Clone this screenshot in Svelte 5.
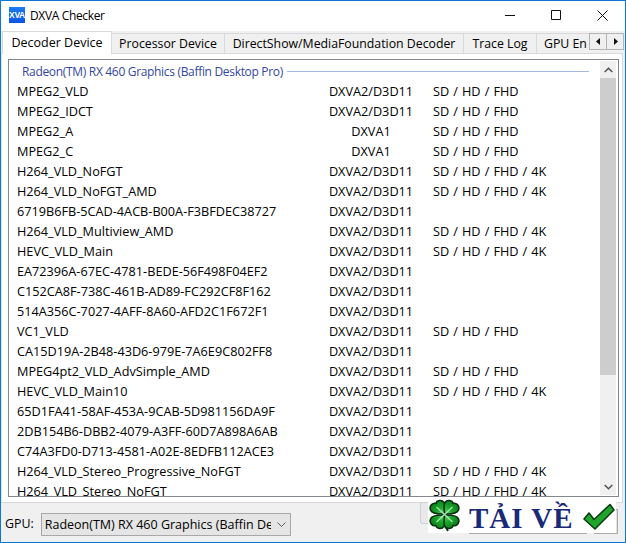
<script>
  const a = 'DXVA2/D3D11';
  const s = 'SD / HD / FHD';
  const k = 'SD / HD / FHD / 4K';
  const rows = [
    ['MPEG2_VLD', a, s],
    ['MPEG2_IDCT', a, s],
    ['MPEG2_A', 'DXVA1', s],
    ['MPEG2_C', 'DXVA1', s],
    ['H264_VLD_NoFGT', a, k],
    ['H264_VLD_NoFGT_AMD', a, k],
    ['6719B6FB-5CAD-4ACB-B00A-F3BFDEC38727', a, ''],
    ['H264_VLD_Multiview_AMD', a, k],
    ['HEVC_VLD_Main', a, k],
    ['EA72396A-67EC-4781-BEDE-56F498F04EF2', a, ''],
    ['C152CA8F-738C-461B-AD89-FC292CF8F162', a, ''],
    ['514A356C-7027-4AFF-8A60-AFD2C1F672F1', a, ''],
    ['VC1_VLD', a, s],
    ['CA15D19A-2B48-43D6-979E-7A6E9C802FF8', a, ''],
    ['MPEG4pt2_VLD_AdvSimple_AMD', a, s],
    ['HEVC_VLD_Main10', a, k],
    ['65D1FA41-58AF-453A-9CAB-5D981156DA9F', a, ''],
    ['2DB154B6-DBB2-4079-A3FF-60D7A898A6AB', a, ''],
    ['C74A3FD0-D713-4581-A02E-8EDFB112ACE3', a, ''],
    ['H264_VLD_Stereo_Progressive_NoFGT', a, k],
    ['H264_VLD_Stereo_NoFGT', a, k]
  ];
</script>

<div class="window">
  <header class="title">
    <div class="logo">XVA</div>
    <span class="title-text">DXVA Checker</span>
    <div class="controls">
      <svg width="11" height="11" viewBox="0 0 11 11"><path d="M0 5.500h10" stroke="#111" fill="none"/></svg>
      <svg width="11" height="11" viewBox="0 0 11 11"><path d="M.5.500h9v9h-9z" stroke="#111" fill="none"/></svg>
      <svg width="11" height="11" viewBox="0 0 11 11"><path d="M.5.500l10 10M10.500.500l-10 10" stroke="#111" fill="none"/></svg>
    </div>
  </header>

  <div class="tabs">
    <div class="tab active">Decoder Device</div>
    <div class="tab t-proc">Processor Device</div>
    <div class="tab t-show">DirectShow/MediaFoundation Decoder</div>
    <div class="tab t-log">Trace Log</div>
    <div class="tab t-gpu">GPU En</div>
    <div class="arrows">
      <div class="arrow"><svg width="5" height="7" viewBox="0 0 5 7"><path d="M4 0v7L0 3.500z" fill="#111"/></svg></div>
      <div class="arrow"><svg width="5" height="7" viewBox="0 0 5 7"><path d="M1 0v7l4-3.500z" fill="#111"/></svg></div>
    </div>
  </div>

  <div class="panel">
    <div class="list">
      <div class="content">
        <div class="group"><span>Radeon(TM) RX 460 Graphics (Baffin Desktop Pro)</span><i></i></div>
        {#each rows as r}
          <div class="row">
            <span class="name">{r[0]}</span>
            <span class="type">{r[1]}</span>
            <span class="res">{r[2]}</span>
          </div>
        {/each}
      </div>
      <div class="scroll">
        <div class="sbtn"><svg width="9" height="6" viewBox="0 0 9 6"><path d="M.7 5l3.800-3.800L8.300 5" stroke="#505050" stroke-width="1.500" fill="none"/></svg></div>
        <div class="track"><div class="thumb"></div></div>
        <div class="sbtn"><svg width="9" height="6" viewBox="0 0 9 6"><path d="M.7 1l3.800 3.800L8.300 1" stroke="#505050" stroke-width="1.500" fill="none"/></svg></div>
      </div>
    </div>
  </div>

  <footer class="bottom">
    <span class="gpu">GPU:</span>
    <div class="select">
      <span class="select-text">Radeon(TM) RX 460 Graphics (Baffin Desktop Pro)</span>
      <svg width="9" height="5" viewBox="0 0 9 5"><path d="M.5.500l4 4 4-4" stroke="#606060" fill="none"/></svg>
    </div>
    <div class="ghost-icon"></div>
    <div class="ghost-btn wide"></div>
    <div class="ghost-btn narrow"></div>
    <div class="badge">
      <svg class="clover" width="33" height="34" viewBox="0 0 33 34">
        <defs>
          <radialGradient id="leaf" gradientUnits="userSpaceOnUse" cx="16.500" cy="15.500" r="17">
            <stop offset="0" stop-color="#7fe08a"/>
            <stop offset="0.45" stop-color="#1aa82c"/>
            <stop offset="1" stop-color="#0b7a1a"/>
          </radialGradient>
        </defs>
        <path d="M17 25c.5 3 1.500 5 3 7" stroke="#0a3012" stroke-width="2" fill="none"/>
        <g fill="url(#leaf)" stroke="#0a3012" stroke-width="1.600" stroke-linejoin="round">
          <path d="M16 15C13 15 4 15.500 2.500 11 1 6.500 5 3.500 8 4.500 8.500 1 14 0.500 16 3.500 17.500 6 17 11 16 15z"/>
          <path d="M17 15c3 0 12 .5 13.500-4C32 6.500 28 3.500 25 4.500 24.500 1 19 .500 17 3.500 15.500 6 16 11 17 15z"/>
          <path d="M16 16c-3 0-12-.5-13.500 4C1 24.500 5 27.500 8 26.500 8.500 30 14 30.500 16 27.500 17.500 25 17 20 16 16z"/>
          <path d="M17 16c3 0 12-.5 13.500 4 1.500 4.500-2.500 7.500-5.500 6.500-.5 3.500-6 4-8 1C15.500 25 16 20 17 16z"/>
        </g>
        <path d="M16.500 15.500L8.500 8M16.500 15.500L24.500 8M16.500 15.500L8.500 23M16.500 15.500L24.500 23" stroke="#a8eab0" stroke-width="1.200"/>
      </svg>
      <span class="tai">TẢI VỀ</span>
      <svg class="check" width="32" height="27" viewBox="0 0 32 27">
        <path d="M1 16L6 10l5 6.500L27 1.500 31 7 12 26z" fill="#1fa52c" stroke="#0d3f14" stroke-width="1.600" stroke-linejoin="round"/>
      </svg>
    </div>
  </footer>
</div>

<style>
  :global(body) { margin: 0; background: #f0f0f0; }
  .window {
    box-sizing: border-box;
    width: 626px;
    height: 543px;
    border: 1px solid #0a78d4;
    background: #f0f0f0;
    display: flex;
    flex-direction: column;
    font-family: "Open Sans", "Noto Sans", sans-serif;
    font-size: 12px;
    color: #000;
    overflow: hidden;
  }
  .title {
    height: 30px;
    background: #fff;
    display: flex;
    align-items: center;
    padding-left: 8px;
    flex: none;
  }
  .logo {
    width: 16px;
    height: 16px;
    margin-bottom: 2px;
    background: linear-gradient(#1c7cf2, #0a55e0);
    color: #fff;
    font: bold 8.500px/16px "Liberation Sans", sans-serif;
    text-align: center;
    letter-spacing: -0.3px;
  }
  .title-text { margin-left: 5px; letter-spacing: -0.35px; margin-bottom: 1px; }
  .controls { margin-left: auto; display: flex; gap: 35px; padding-right: 17px; margin-bottom: 2px; }
  .controls svg { display: block; }
  .tabs {
    height: 22px;
    flex: none;
    display: flex;
    align-items: flex-end;
    position: relative;
    padding-left: 1px;
    z-index: 1;
  }
  .tab {
    box-sizing: border-box;
    height: 20px;
    font-size: 12.300px;
    line-height: 19px;
    text-align: center;
    border-top: 1px solid #d9d9d9;
    border-right: 1px solid #d9d9d9;
    background: #f0f0f0;
    white-space: nowrap;
    flex: none;
  }
  .tab.active {
    height: 23px;
    width: 110px;
    margin-bottom: -1px;
    background: #fff;
    border: 1px solid #d9d9d9;
    border-bottom: 0;
    line-height: 21px;
    padding-bottom: 2px;
    font-size: 12.500px;
  }
  .t-proc { width: 113px; }
  .t-show { width: 239px; }
  .t-log { width: 73px; }
  .t-gpu { width: 52px; text-align: left; padding-left: 7px; border-right: 0; }
  .arrows {
    position: absolute;
    right: 1px;
    top: 2px;
    display: flex;
  }
  .arrow {
    box-sizing: border-box;
    width: 18px;
    height: 17px;
    border: 1px solid #b4b4b4;
    display: flex;
    align-items: center;
    justify-content: center;
    background: #f0f0f0;
  }
  .arrow + .arrow { margin-left: -1px; }
  .panel {
    flex: none;
    height: 450px;
    margin-right: 2px;
    background: #fff;
    padding: 5px 3px 5px 6px;
    box-sizing: border-box;
    border: 1px solid #d9d9d9;
    border-left-color: #e4e4e4;
  }
  .list {
    box-sizing: border-box;
    height: 100%;
    border: 1px solid #828790;
    display: flex;
    background: #fff;
  }
  .content { flex: 1; overflow: hidden; min-width: 0; }
  .group {
    height: 20px;
    display: flex;
    align-items: center;
    margin: 1px 11px 0 0;
    padding-left: 13px;
    color: #34489f;
    letter-spacing: -0.32px;
  }
  .group span { white-space: nowrap; }
  .group i { flex: 1; height: 1px; background: #a6b8e6; margin-left: 4px; }
  .row { height: 20px; line-height: 20px; display: flex; white-space: nowrap; font-size: 12.700px; }
  .name { width: 304px; padding-left: 8px; box-sizing: border-box; }
  .type { width: 100px; text-align: center; margin-left: 8px; }
  .res { margin-left: 12px; word-spacing: 0.8px; }
  .scroll {
    width: 16px;
    margin: 1px 2px 1px 0;
    flex: none;
    display: flex;
    flex-direction: column;
    background: #f0f0f0;
  }
  .sbtn { height: 17px; display: flex; align-items: center; justify-content: center; flex: none; }
  .track { flex: 1; }
  .thumb { height: 297px; background: #cdcdcd; }
  .bottom {
    flex: 1;
    display: flex;
    align-items: center;
    position: relative;
    background: #f0f0f0;
  }
  .gpu { margin-left: 4px; font-size: 12.400px; margin-top: 2px; }
  .select {
    box-sizing: border-box;
    width: 250px;
    height: 23px;
    margin: 4px 0 0 7px;
    border: 1px solid #a8a8a8;
    background: #e5e5e5;
    display: flex;
    align-items: center;
    padding: 0 4px 0 3px;
    gap: 6px;
  }
  .select-text { flex: 1; overflow: hidden; white-space: nowrap; min-width: 0; font-size: 12.500px; }
  .ghost-icon {
    position: absolute;
    left: 419px;
    top: -1px;
    width: 14px;
    height: 22px;
    background: #e9e9e9;
    border: 1px solid #d0d0d0;
    border-radius: 2px;
    box-sizing: border-box;
  }
  .ghost-btn {
    position: absolute;
    top: 6px;
    height: 25px;
    box-sizing: border-box;
    border: 1px solid #adadad;
    background: #e1e1e1;
  }
  .wide { left: 468px; width: 118px; }
  .narrow { left: 593px; width: 24px; }
  .badge {
    position: absolute;
    left: 427px;
    top: -5px;
    width: 188px;
    height: 35px;
    background: #fff;
    display: flex;
    align-items: center;
  }
  .clover { flex: none; }
  .tai {
    margin-left: 8px;
    font-family: "Liberation Serif", serif;
    font-weight: bold;
    font-size: 29px;
    color: #1a2a78;
    letter-spacing: 1px;
    line-height: 30px;
    white-space: nowrap;
    margin-top: 4px;
  }
  .check { margin-left: auto; flex: none; margin-right: 1px; margin-top: 2px; }
</style>
